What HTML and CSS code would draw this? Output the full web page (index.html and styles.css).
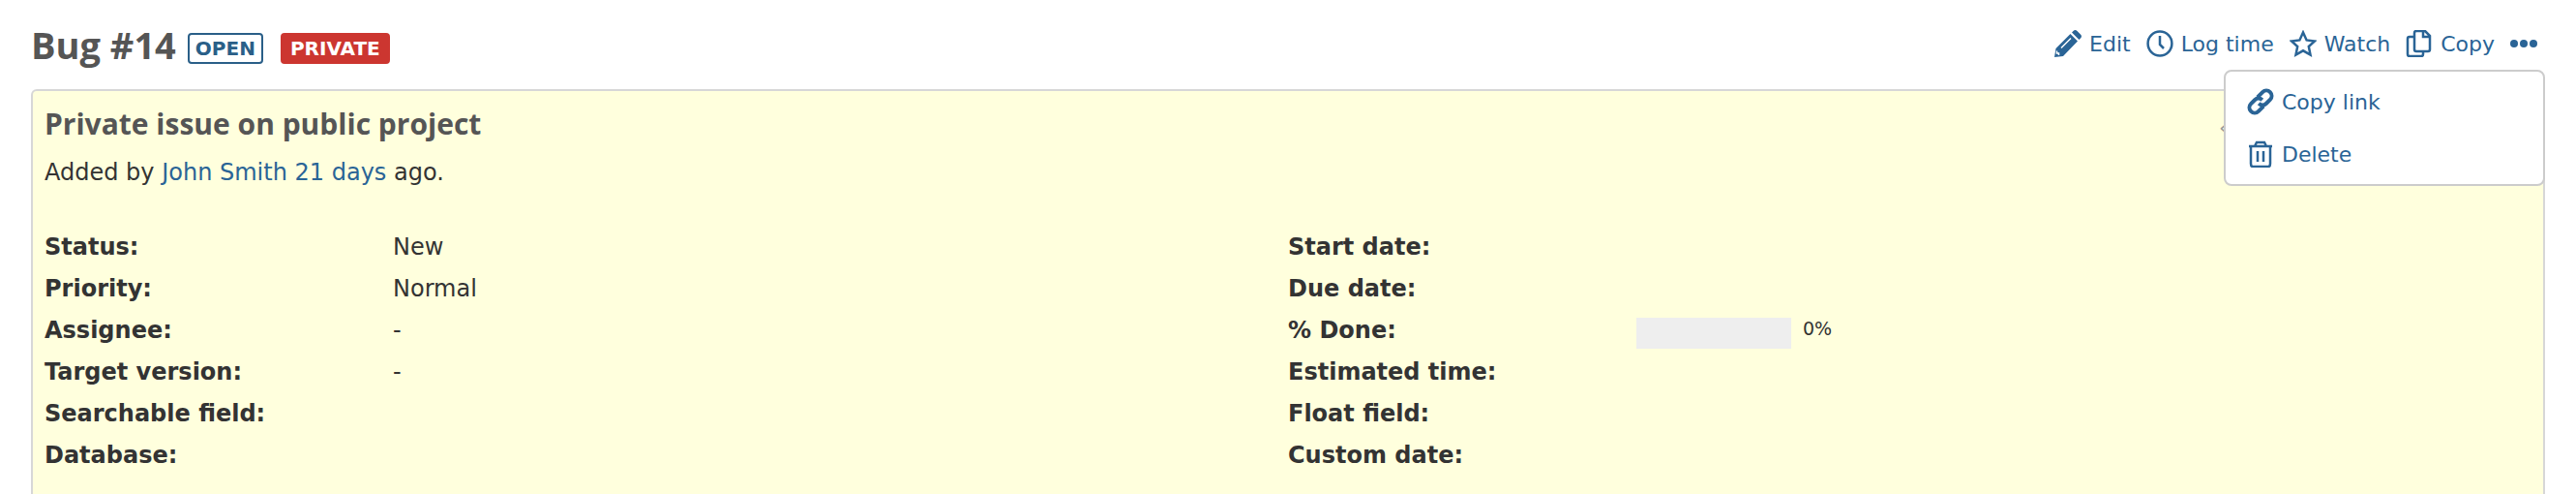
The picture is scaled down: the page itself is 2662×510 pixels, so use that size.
FILE: index.html
```html
<!DOCTYPE html>
<html lang="en">
<head>
	<meta charset="UTF-8">
	<title>Bug #14: Private issue on public project</title>
	<link rel="stylesheet" href="styles.css">
</head>
<body>
	<div class="header">
		<h2>Bug #14</h2>
		<span class="badge badge-open">open</span>
		<span class="badge badge-private">private</span>

		<div class="contextual">
			<a class="icon" href="#edit">
				<svg viewBox="0 0 28 28"><path d="M1.500 19 16.500 4l7.500 7.500L9 27l-9 1zM18 2.500l1.500-1.500q2-2 4 0l3.500 3.500q2 2 0 4L25.500 10z"/><path class="cut" d="M7 18.500 17 8.500M2.500 21.500v2.500h2v2"/></svg>
				Edit
			</a>
			<a class="icon" href="#log-time">
				<svg viewBox="0 0 28 28"><g class="line"><circle cx="14" cy="14" r="12.4"/><path d="M14 6v9l4 4"/></g></svg>
				Log time
			</a>
			<a class="icon" href="#watch">
				<svg viewBox="0 0 28 28"><path class="line" d="m14 2.500 3.600 7.900 8.400 1-6.200 5.600 1.700 8.500L14 21.300l-7.500 4.200 1.700-8.500L2 11.400l8.400-1z"/></svg>
				Watch
			</a>
			<a class="icon" href="#copy">
				<svg viewBox="0 0 28 28"><g class="line"><path d="M11 1h9l5 5v14q0 2-2 2H11q-2 0-2-2V3q0-2 2-2zM18 1v6h7"/><path d="M8 7H4Q2 7 2 9v16q0 2 2 2h12q2 0 2-2v-3"/></g></svg>
				Copy
			</a>
			<div class="drdn">
				<button class="dots" type="button" aria-label="Actions" aria-expanded="true">
					<svg viewBox="0 0 28 28"><circle cx="4" cy="14" r="4"/><circle cx="14" cy="14" r="4"/><circle cx="24" cy="14" r="4"/></svg>
				</button>
				<div class="drdn-items">
					<a class="icon" href="#copy-link">
						<svg viewBox="0 0 28 28"><g class="line thick" transform="translate(14 14) rotate(-45)"><path d="M1-5.500H8.500a5.500 5.500 0 0 1 0 11H3A5.500 5.500 0 0 1-2.500 0"/><path d="M-1 5.500H-8.500a5.500 5.500 0 0 1 0-11H-3A5.500 5.500 0 0 1 2.500 0"/></g></svg>
						Copy link
					</a>
					<a class="icon" href="#delete">
						<svg viewBox="0 0 28 28"><path class="line" d="M2 6h24M8 6l2-4h8l2 4M4 6v18q0 3 2 3h16q2 0 2-3V6M11 11v11M17 11v11"/></svg>
						Delete
					</a>
				</div>
			</div>
		</div>
	</div>

	<div class="issue">
		<div class="subject">
			<h3>Private issue on public project</h3>
			<div class="next-prev">«</div>
		</div>
		<p class="author">Added by <a href="#john-smith">John Smith</a> <a href="#activity">21 days</a> ago.</p>

		<div class="attributes">
			<dl>
				<dt>Status:</dt><dd>New</dd>
				<dt>Priority:</dt><dd>Normal</dd>
				<dt>Assignee:</dt><dd>-</dd>
				<dt>Target version:</dt><dd>-</dd>
				<dt>Searchable field:</dt><dd></dd>
				<dt>Database:</dt><dd></dd>
			</dl>
			<dl>
				<dt>Start date:</dt><dd></dd>
				<dt>Due date:</dt><dd></dd>
				<dt>% Done:</dt><dd class="done"><span class="progress"></span><span class="percent">0%</span></dd>
				<dt>Estimated time:</dt><dd></dd>
				<dt>Float field:</dt><dd></dd>
				<dt>Custom date:</dt><dd></dd>
			</dl>
		</div>
	</div>
</body>
</html>
```
FILE: styles.css
```css
body {
	margin: 0;
	padding: 0 32px;
	font-family: Verdana, "DejaVu Sans", sans-serif;
	font-size: 24px;
	color: #333;
	background: #fff;
}
a {
	color: #2a6496;
	text-decoration: none;
}
h2, h3 {
	margin: 0;
	font-family: "Trebuchet MS", "Open Sans", sans-serif;
	color: #555;
}
h2 {
	font-size: 38px;
	line-height: 48px;
}
h3 {
	font-size: 30px;
	line-height: 40px;
}

/* title row */
.header {
	display: flex;
	align-items: center;
	height: 92px;
}
.badge {
	box-sizing: border-box;
	height: 32px;
	margin: 8px 0 0 12px;
	padding: 0 6px;
	border: 2px solid #2a5f88;
	border-radius: 4px;
	font-size: 20px;
	font-weight: bold;
	line-height: 29px;
	text-transform: uppercase;
	color: #2a5f88;
}
.badge-private {
	margin-left: 18px;
	padding: 0 8px;
	border-color: #cc3630;
	background: #cc3630;
	color: #fff;
}
.contextual {
	display: flex;
	gap: 16px;
	margin-left: auto;
	padding-bottom: 2px;
	font-size: 22px;
}

.icon {
	display: flex;
	align-items: center;
	gap: 8px;
	white-space: nowrap;
}
svg {
	display: block;
	width: 28px;
	height: 28px;
	fill: #2a6496;
}
.line {
	fill: none;
	stroke: #2a6496;
	stroke-width: 2.5;
}
.thick {
	stroke-width: 4;
}
.cut {
	fill: none;
	stroke: #fff;
	stroke-width: 1.5;
}

/* drop-down */
.drdn {
	position: relative;
	padding-right: 8px;
}
.dots {
	display: block;
	padding: 0;
	border: 0;
	background: none;
}
.drdn-items {
	box-sizing: border-box;
	position: absolute;
	z-index: 1;
	top: 41px;
	right: 0;
	width: 332px;
	padding: 4px 22px;
	border: 2px solid #ccc;
	border-radius: 8px;
	background: #fff;
}
.drdn-items .icon {
	height: 54px;
}

/* issue box */
.issue {
	box-sizing: border-box;
	min-height: 418px;
	padding: 14px 12px 0;
	border: 2px solid #d7d7d7;
	border-bottom: 0;
	border-radius: 6px 6px 0 0;
	background: #ffffdd;
}
.subject {
	display: flex;
	justify-content: space-between;
}
.next-prev {
	width: 323px;
	font-size: 22px;
	line-height: 48px;
	height: 40px;
	color: #999;
}
.author {
	margin: 12px 0 38px;
	line-height: 36px;
}
.attributes {
	display: grid;
	grid-template-columns: 1fr 1fr;
}
dl {
	display: grid;
	grid-template-columns: 360px 1fr;
	grid-auto-rows: 43px;
	margin: 0;
	line-height: 43px;
}
dt {
	font-weight: bold;
}
dd {
	margin: 0;
}
.done {
	display: flex;
	gap: 12px;
}
.progress {
	width: 160px;
	height: 32px;
	margin-top: 8px;
	background: #eee;
}
.percent {
	font-size: 19px;
	line-height: 38px;
}
```
